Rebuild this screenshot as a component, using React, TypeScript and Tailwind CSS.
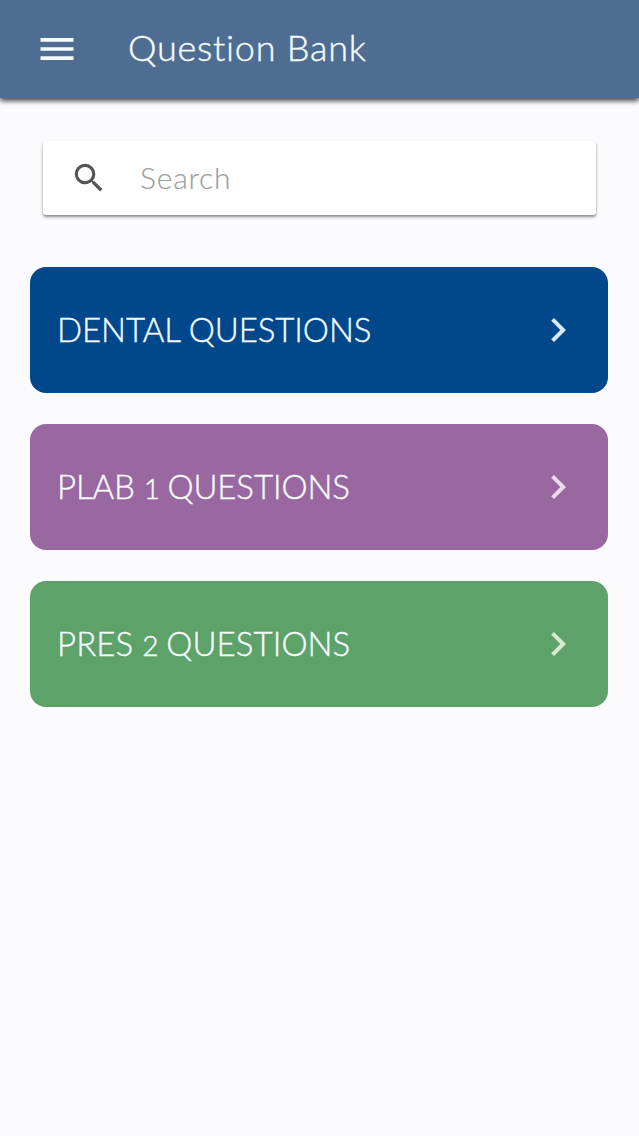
import React from 'react';
import { MdChevronRight, MdMenu, MdSearch } from 'react-icons/md';

interface Category {
  id: string;
  prefix: string;
  digit?: string;
  color: string;
  arrow: string;
  tracking: string;
}

const categories: Category[] = [
  { id: 'dental', prefix: 'DENTAL', color: 'bg-[#00488b]', arrow: 'text-[#dde8f8]', tracking: 'tracking-[-0.08px]' },
  { id: 'plab', prefix: 'PLAB', digit: '1', color: 'bg-[#9a68a0]', arrow: 'text-[#ecd9ee]', tracking: 'tracking-[-0.1px]' },
  { id: 'pres', prefix: 'PRES', digit: '2', color: 'bg-[#5da269]', arrow: 'text-[#d9ead4]', tracking: 'tracking-[0.08px]' },
];

const Header = () => (
  <header className="relative z-10 flex h-[98px] items-center bg-[#4f6d91] pl-[35px] text-[#f4fdff] shadow-[0_3px_5px_rgba(0,0,0,0.7)]">
    <button aria-label="Menu" className="pb-px">
      <MdMenu size={44} />
    </button>
    <h1 className="ml-[49px] pb-[4px] text-[36px] leading-none font-light tracking-[0.75px] whitespace-nowrap [-webkit-text-stroke:0.4px]">
      Question Bank
    </h1>
  </header>
);

const SearchBar = () => (
  <div className="mx-[43px] mt-[43px] flex h-[74px] items-center rounded-[3px] bg-white pl-[27px] shadow-[0_2px_3px_rgba(0,0,0,0.45)]">
    <MdSearch size={38} className="text-[#555358]" />
    <span className="ml-[32px] pb-[3px] text-[30px] leading-none font-light tracking-[0.8px] text-[#a09fa2] [-webkit-text-stroke:0.2px]">
      Search
    </span>
  </div>
);

const CategoryCard = ({ item }: { item: Category }) => (
  <button className={`flex h-[126px] w-full items-center justify-between rounded-[16px] pr-[26px] pl-[27px] ${item.color}`}>
    <span
      className={`pb-[1px] text-[33px] leading-none font-light whitespace-nowrap text-[#f6fbff] [-webkit-text-stroke:0.4px] ${item.tracking}`}
    >
      {item.prefix}{' '}
      {item.digit && <span className="text-[28px]">{item.digit} </span>}
      QUESTIONS
    </span>
    <MdChevronRight size={48} className={item.arrow} />
  </button>
);

export default function App() {
  return (
    <div className="min-h-[1136px] bg-[#fbfafd] font-[Lato,'Open_Sans',sans-serif]">
      <Header />
      <SearchBar />
      <main className="mt-[52px] flex flex-col gap-[31px] pr-[31px] pl-[30px]">
        {categories.map((item) => (
          <CategoryCard key={item.id} item={item} />
        ))}
      </main>
    </div>
  );
}
